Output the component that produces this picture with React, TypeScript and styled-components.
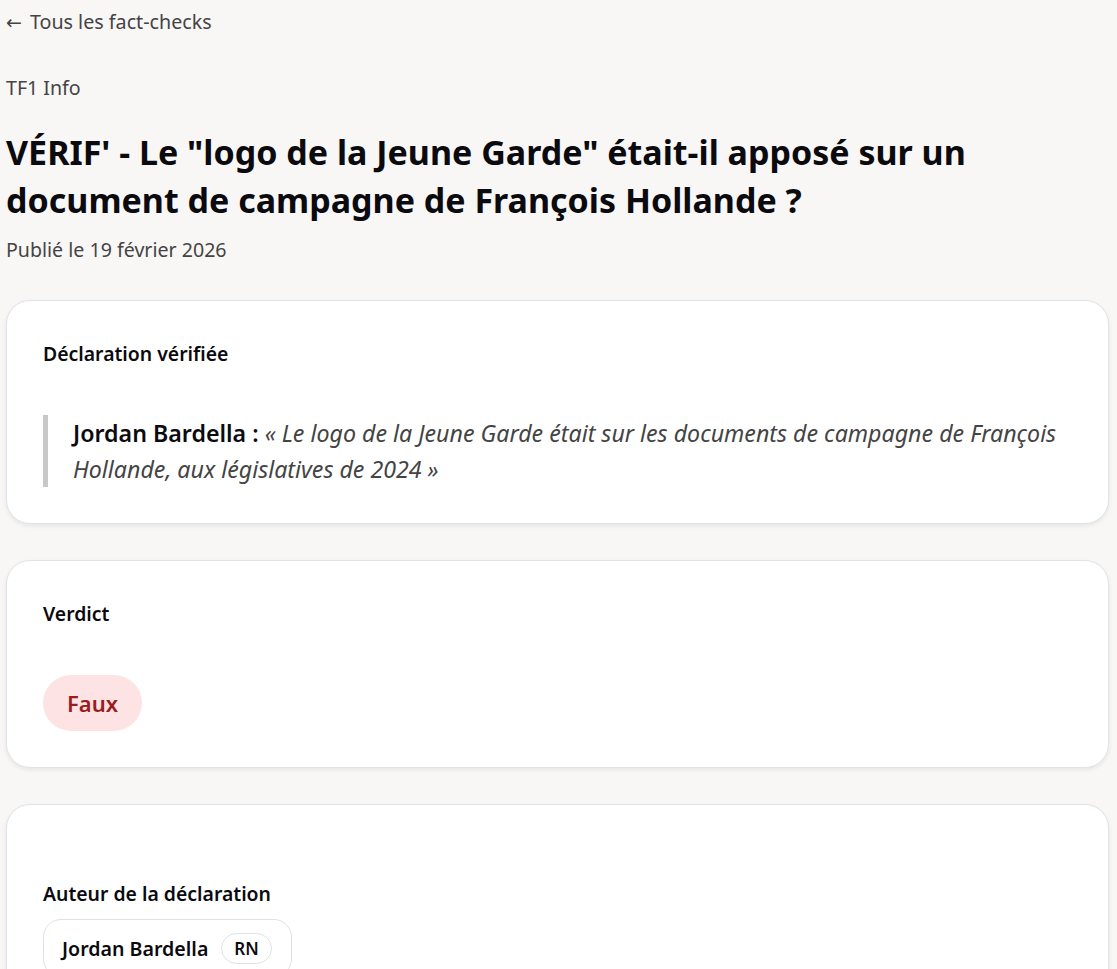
import React from "react";
import styled, { createGlobalStyle } from "styled-components";

const Global = createGlobalStyle`
  html, body { margin: 0; padding: 0; background: #f8f7f6; }
  body { font-family: "Noto Sans", "Open Sans", sans-serif; color: #1a1a1a; }
  * { box-sizing: border-box; }
`;

const Page = styled.main`
  padding: 7px 8px 40px 6px;
`;

const BackLink = styled.a`
  display: flex;
  align-items: center;
  gap: 8px;
  font-size: 19.7px;
  line-height: 30px;
  color: #444;
  text-decoration: none;
`;

const Arrow = styled.span`
  font-family: "DejaVu Sans", sans-serif;
  font-size: 19px;
`;

const Source = styled.div`
  margin-top: 36px;
  font-size: 19.6px;
  line-height: 30px;
  color: #444;
`;

const Title = styled.h1`
  margin: 25px 0 0;
  font-size: 34px;
  line-height: 48px;
  font-weight: 700;
  color: #0b0b0f;
`;

const Published = styled.div`
  margin-top: 11px;
  font-size: 19.6px;
  line-height: 30px;
  color: #444;
`;

const Cards = styled.div`
  margin-top: 35px;
  display: flex;
  flex-direction: column;
  gap: 36px;
`;

const Card = styled.section<{ $topSpace?: number }>`
  background: #fff;
  border: 1px solid #e1e3ea;
  border-radius: 24px;
  box-shadow: 0 2px 4px rgba(0, 0, 0, 0.07);
  padding: ${(p) => 36 + (p.$topSpace ?? 0)}px 36px 36px;
`;

const CardTitle = styled.h2<{ $gap?: number }>`
  margin: 3px 0 ${(p) => p.$gap ?? 48}px;
  font-size: 19.4px;
  line-height: 27px;
  font-weight: 600;
  color: #0b0b0f;
`;

const Quote = styled.blockquote`
  margin: 0;
  border-left: 5px solid #c8c8c8;
  padding-left: 25px;
  font-size: 23.2px;
  line-height: 36px;
  color: #444;
`;

const Speaker = styled.strong`
  font-weight: 600;
  color: #0b0b0f;
`;

const QuoteText = styled.em`
  font-style: italic;
`;

const VerdictPill = styled.span`
  display: inline-flex;
  align-items: center;
  height: 56px;
  padding: 0 24px;
  border-radius: 28px;
  background: #fde3e3;
  color: #9b1c1c;
  font-size: 22px;
  font-weight: 600;
`;

const AuthorChip = styled.div`
  display: inline-flex;
  align-items: center;
  gap: 13px;
  height: 58px;
  padding: 0 19px 0 18px;
  border: 1px solid #dfe1e8;
  border-radius: 18px;
  font-size: 19.6px;
  font-weight: 600;
  color: #0b0b0f;
`;

const PartyBadge = styled.span`
  display: inline-flex;
  align-items: center;
  height: 31px;
  padding: 0 12px;
  border: 1px solid #dfe1e8;
  border-radius: 16px;
  font-size: 17px;
  font-weight: 600;
`;

export default function App() {
  return (
    <>
      <Global />
      <Page>
        <BackLink href="#">
          <Arrow>←</Arrow>
          <span>Tous les fact-checks</span>
        </BackLink>
        <Source>TF1 Info</Source>
        <Title>
          VÉRIF' - Le "logo de la Jeune Garde" était-il apposé sur un document de campagne de François Hollande ?
        </Title>
        <Published>Publié le 19 février 2026</Published>
        <Cards>
          <Card>
            <CardTitle>Déclaration vérifiée</CardTitle>
            <Quote>
              <Speaker>Jordan Bardella :</Speaker>{" "}
              <QuoteText>
                « Le logo de la Jeune Garde était sur les documents de campagne de François Hollande, aux législatives de 2024 »
              </QuoteText>
            </Quote>
          </Card>
          <Card>
            <CardTitle>Verdict</CardTitle>
            <VerdictPill>Faux</VerdictPill>
          </Card>
          <Card $topSpace={36}>
            <CardTitle $gap={12}>Auteur de la déclaration</CardTitle>
            <AuthorChip>
              Jordan Bardella
              <PartyBadge>RN</PartyBadge>
            </AuthorChip>
          </Card>
        </Cards>
      </Page>
    </>
  );
}
